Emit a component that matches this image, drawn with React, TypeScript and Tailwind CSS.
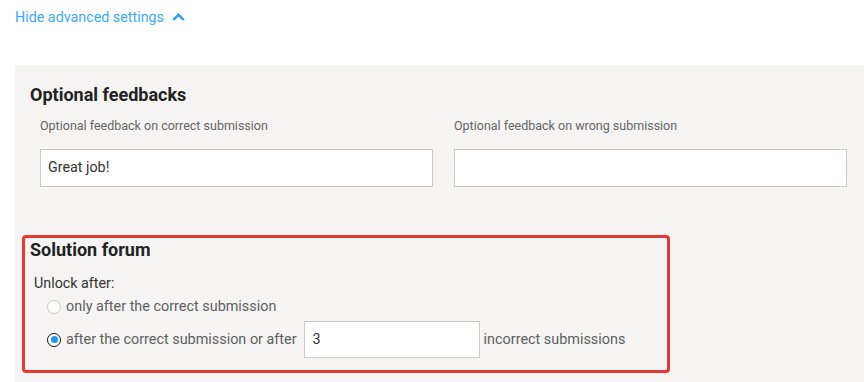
import React from "react";

function Radio({ checked }: { checked?: boolean }) {
  if (checked) {
    return (
      <span className="box-border flex h-[14px] w-[14px] shrink-0 items-center justify-center rounded-full border-[1.5px] border-[#111] bg-white">
        <span className="h-[7px] w-[7px] rounded-full bg-[#1e96f0]" />
      </span>
    );
  }
  return <span className="box-border block h-[14px] w-[14px] shrink-0 rounded-full border border-[#c9c9c9] bg-white" />;
}

export default function App() {
  return (
    <div className="h-[382px] w-[864px] overflow-hidden bg-white" style={{ fontFamily: "Roboto, 'Liberation Sans', sans-serif" }}>
      <div className="flex items-center pl-[15px] pt-[7px] text-[14.3px] leading-[20px] text-[#3ea8f5]">
        <span>Hide advanced settings</span>
        <svg className="ml-[8px]" width="13" height="8" viewBox="0 0 13 8" fill="none">
          <path d="M1.2 7 L6.5 1.8 L11.8 7" stroke="#2a9ff2" strokeWidth="2.4" />
        </svg>
      </div>
      <div className="ml-[15px] mt-[38px] h-[400px] bg-[#f5f4f2] pl-[7px] pt-[18px]">
        <div className="pl-[8px]">
          <div className="text-[18px] font-bold leading-[24px] text-[#222]">Optional feedbacks</div>
          <div className="mt-[10px] flex gap-[21px] pl-[10px]">
            <div className="w-[393px]">
              <div className="text-[12.5px] leading-[18px] text-[#666]">Optional feedback on correct submission</div>
              <div className="mt-[13.5px] box-border flex h-[38px] items-center border border-[#cdcac5] bg-white pl-[7px] text-[14.3px] text-[#333]">
                Great job!
              </div>
            </div>
            <div className="w-[393px]">
              <div className="text-[12.5px] leading-[18px] text-[#666]">Optional feedback on wrong submission</div>
              <div className="mt-[13.5px] box-border h-[38px] border border-[#cdcac5] bg-white" />
            </div>
          </div>
        </div>
        <div className="mt-[48px] box-border w-[648px] rounded-[4px] border-[3px] border-[#e53935] pb-[11px] pl-[5px]">
          <div className="text-[18px] font-bold leading-[24px] text-[#222]">Solution forum</div>
          <div className="mt-[11px] pl-[4px] text-[14.3px] leading-[20px] text-[#333]">Unlock after:</div>
          <div className="flex h-[28px] items-center pl-[17px] text-[14.4px] text-[#5f5f5f]">
            <Radio />
            <span className="ml-[5px]">only after the correct submission</span>
          </div>
          <div className="flex h-[38px] items-center pl-[17px] text-[14.4px] text-[#5f5f5f]">
            <Radio checked />
            <span className="ml-[5px]">after the correct submission or after</span>
            <div className="ml-[7px] box-border flex h-[37px] w-[176px] items-center border border-[#cdcac5] bg-white pl-[8px] text-[14.3px] text-[#333]">
              3
            </div>
            <span className="ml-[4px]">incorrect submissions</span>
          </div>
        </div>
      </div>
    </div>
  );
}
